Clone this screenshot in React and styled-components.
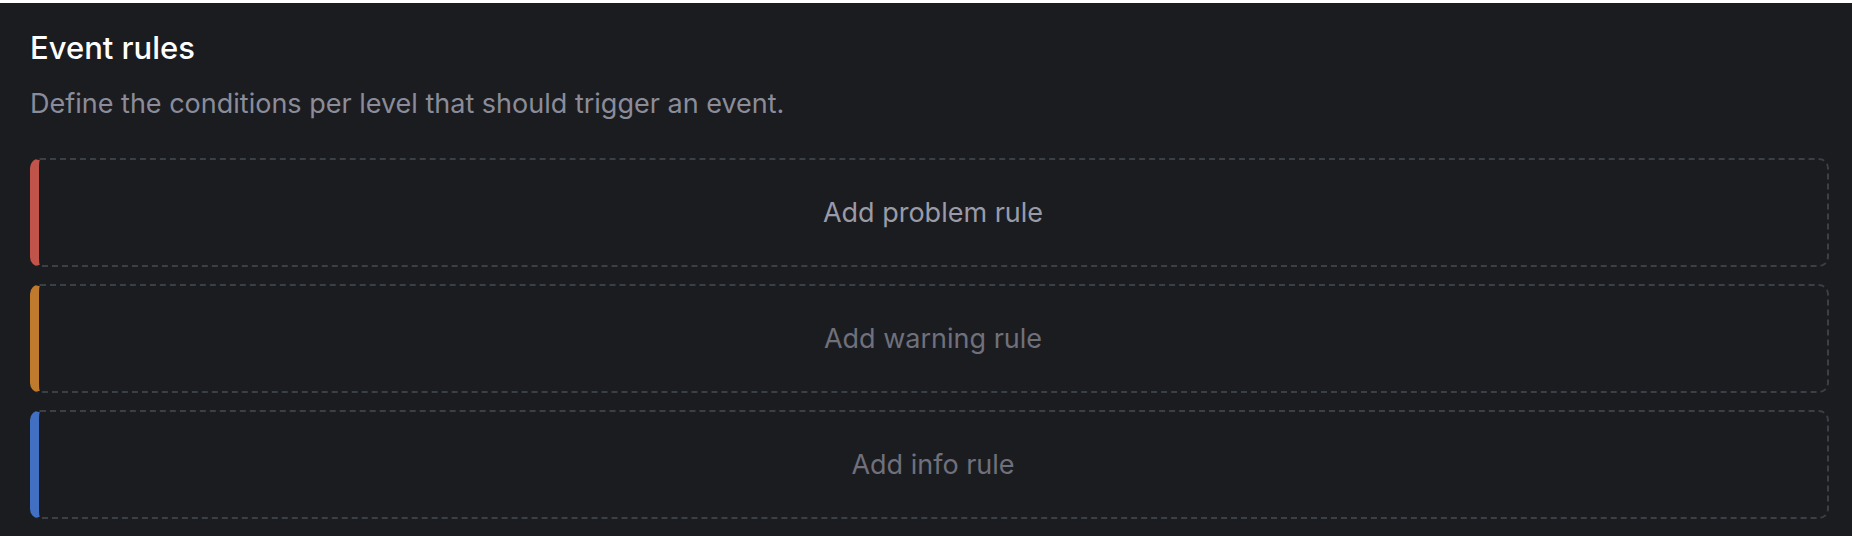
import { styled, createGlobalStyle } from 'styled-components';

const GlobalStyle = createGlobalStyle`
  html, body {
    margin: 0;
    padding: 0;
    background: #ffffff;
  }
  body {
    font-family: Inter, "Noto Sans", sans-serif;
  }
`;

const rules = [
  { id: 'problem', label: 'Add problem rule', color: '#c1544a', text: '#9a9ba8' },
  { id: 'warning', label: 'Add warning rule', color: '#c07a2e', text: '#6f707c' },
  { id: 'info', label: 'Add info rule', color: '#4170c2', text: '#6f707c' },
];

const App = () => {
  return (
    <>
      <GlobalStyle />
      <Panel>
        <Title>Event rules</Title>
        <Description>
          Define the conditions per level that should trigger an event.
        </Description>
        <RuleList>
          {rules.map((rule) => (
            <RuleButton key={rule.id} $accent={rule.color} $text={rule.text}>
              {rule.label}
            </RuleButton>
          ))}
        </RuleList>
      </Panel>
    </>
  );
};
export default App;

const Panel = styled.section`
  margin-top: 3px;
  height: 533px;
  box-sizing: border-box;
  background-color: #1b1c20;
  padding: 26px 23px 0 30px;
`;

const Title = styled.h2`
  margin: 0;
  font-size: 31px;
  line-height: 38px;
  font-weight: 500;
  color: #ffffff;
`;

const Description = styled.p`
  margin: 20px 0 0;
  font-size: 27px;
  line-height: 34px;
  color: #8b8c9a;
`;

const RuleList = styled.div`
  display: flex;
  flex-direction: column;
  gap: 17px;
  margin-top: 37px;
`;

const RuleButton = styled.button`
  height: 109px;
  box-sizing: border-box;
  display: flex;
  align-items: center;
  justify-content: center;
  background: transparent;
  border: 2px dashed #3b3f46;
  border-left: 9px solid ${(p) => p.$accent};
  border-radius: 10px;
  font-family: Inter, "Noto Sans", sans-serif;
  font-size: 27px;
  color: ${(p) => p.$text};
  cursor: pointer;
`;
